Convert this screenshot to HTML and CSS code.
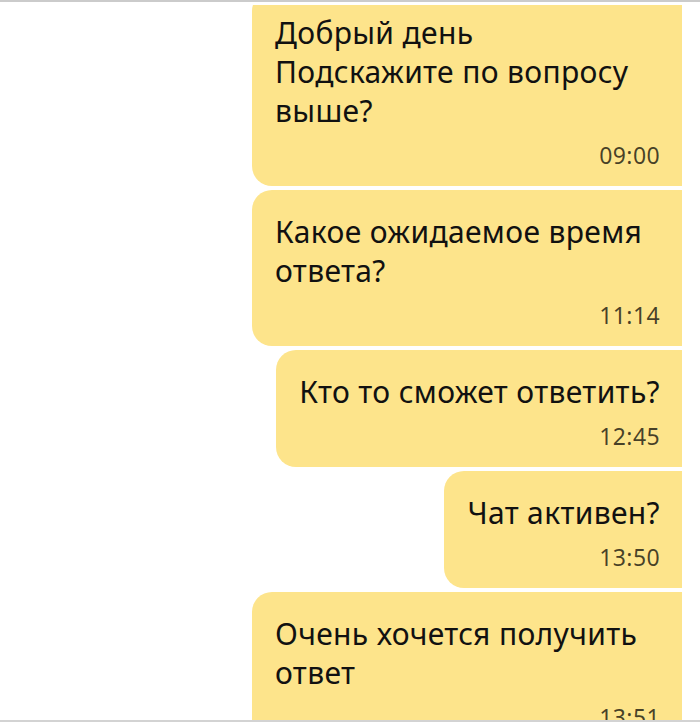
FILE: index.html
```html
<!DOCTYPE html>
<html lang="ru">

<head>
    <meta charset="UTF-8">
    <meta name="viewport" content="width=device-width, initial-scale=1.0">
    <title>Чат</title>
    <link rel="stylesheet" href="styles.css">
</head>

<body>

    <div id="screen">
        <!-- Message list, scrolled a little -->
        <div id="messages">
            <div class="list">
                <div class="bubble">
                    <p class="text">Добрый день<br>Подскажите по вопросу выше?</p>
                    <span class="time">09:00</span>
                </div>
                <div class="bubble">
                    <p class="text">Какое ожидаемое время ответа?</p>
                    <span class="time">11:14</span>
                </div>
                <div class="bubble">
                    <p class="text">Кто то сможет ответить?</p>
                    <span class="time">12:45</span>
                </div>
                <div class="bubble">
                    <p class="text">Чат активен?</p>
                    <span class="time">13:50</span>
                </div>
                <div class="bubble">
                    <p class="text">Очень хочется получить ответ</p>
                    <span class="time">13:51</span>
                </div>
            </div>
        </div>
    </div>

</body>

</html>
```

FILE: styles.css
```css
body {
    margin: 0;
    background-color: #fff;
    font-family: "Noto Sans", "Open Sans", sans-serif;
}

#screen {
    height: 718px;
    border-top: 2px solid #cbcbcb;
    border-bottom: 2px solid #d3d3d3;
    overflow: hidden;
    display: flex;
    flex-direction: column;
}

#messages {
    flex: 1;
    margin-top: 3px;
    overflow: hidden;
}

.list {
    margin-top: -14px;
    padding-right: 18px;
    display: flex;
    flex-direction: column;
    align-items: flex-end;
    gap: 4px;
}

/* Message bubble */
.bubble {
    max-width: 430px;
    box-sizing: border-box;
    padding: 22px 22px 17px 23px;
    background-color: #fde48b;
    border-radius: 20px 0 0 20px;
    display: flex;
    flex-direction: column;
}

.text {
    margin: 0;
    font-size: 30px;
    letter-spacing: 0.35px;
    line-height: 39px;
    color: #111;
}

.time {
    align-self: flex-end;
    margin-top: 11px;
    font-size: 23px;
    letter-spacing: 0.4px;
    line-height: 28px;
    color: rgba(0, 0, 0, 0.72);
}
```
